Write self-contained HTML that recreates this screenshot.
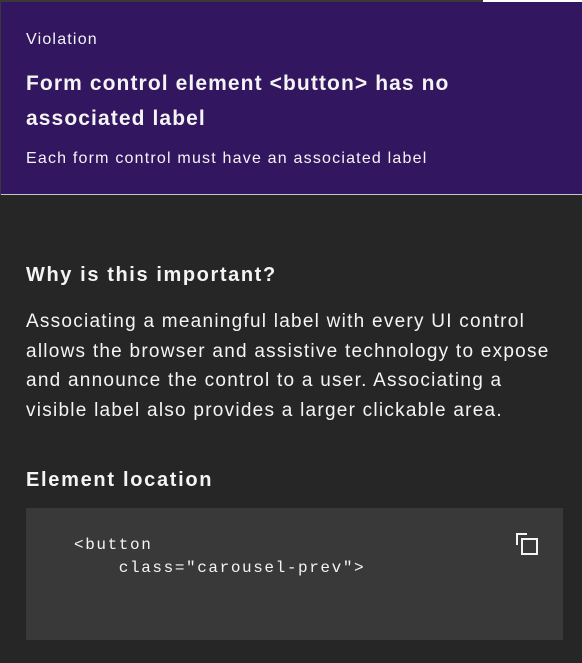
<!DOCTYPE html>
<html><head><style>
body{margin:0;width:582px;height:663px;background:#262626;font-family:"Liberation Sans",sans-serif;color:#f4f4f4;position:relative;overflow:hidden}
.top{position:absolute;left:0;top:0;width:582px;height:2px;background:#393939}
.topw{position:absolute;left:483px;top:0;width:99px;height:2px;background:#fff}
.hdr{position:absolute;left:1px;top:2px;width:581px;height:192px;background:#321660;border-bottom:1px solid #c6c6c6}
.lb{position:absolute;left:0;top:0;width:1px;height:195px;background:#393939}
.t{position:absolute;left:26px;white-space:nowrap}
.code{position:absolute;left:26px;top:508px;width:537px;height:132px;background:#393939}
pre{margin:0;position:absolute;left:48px;top:26px;font-family:"Liberation Mono",monospace;font-size:16px;letter-spacing:1.6px;line-height:23px;color:#f4f4f4}
</style></head><body>
<div class="top"></div><div class="topw"></div>
<div class="hdr"></div><div class="lb"></div>
<div class="t" style="top:31px;font-size:16px;letter-spacing:1.2px">Violation</div>
<div class="t" style="top:66px;font-size:21px;font-weight:bold;line-height:35px;letter-spacing:1.1px">Form control element &lt;button&gt; has no<br>associated label</div>
<div class="t" style="top:150px;font-size:16px;letter-spacing:1.2px">Each form control must have an associated label</div>
<div class="t" style="top:264px;font-size:20px;font-weight:bold;letter-spacing:1.6px">Why is this important?</div>
<div class="t" style="top:307px;font-size:19px;line-height:29.5px;letter-spacing:1.25px">Associating a meaningful label with every UI control<br>allows the browser and assistive technology to expose<br>and announce the control to a user. Associating a<br>visible label also provides a larger clickable area.</div>
<div class="t" style="top:469px;font-size:20px;font-weight:bold;letter-spacing:1.7px">Element location</div>
<div class="code"><pre>&lt;button
    class="carousel-prev"&gt;</pre>
<svg style="position:absolute;left:488px;top:23px" width="26" height="26" viewBox="0 0 26 26" fill="none" stroke="#f4f4f4" stroke-width="2"><path d="M3 14V3H13"/><rect x="8" y="8" width="15" height="15"/></svg>
</div>
</body></html>
